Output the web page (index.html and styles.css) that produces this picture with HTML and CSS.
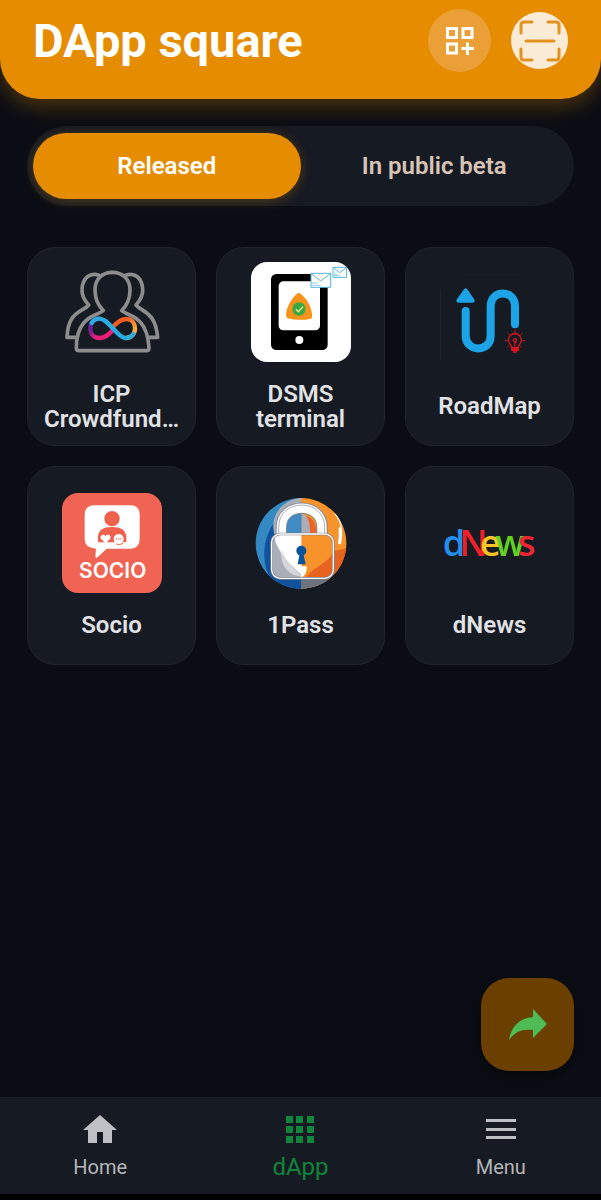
FILE: index.html
```html
<!DOCTYPE html>
<html lang="en">
<head>
    <meta charset="UTF-8">
    <meta name="viewport" content="width=device-width, initial-scale=1.0">
    <title>DApp square</title>
    <link rel="stylesheet" href="styles.css">
</head>
<body>
    <header class="header">
        <h1>DApp square</h1>
        <div class="header-actions">
            <button type="button" class="add-button" aria-label="Add dApp">
                <svg viewBox="0 0 56 56" width="28" height="28" fill="none" stroke="#fff" stroke-width="6">
                    <path d="M3 3h18v18H3zM34 3h18v18H34zM3 34h18v18H3z"/>
                    <path d="M43 31v25M31 43h25"/>
                </svg>
            </button>
            <button type="button" class="scan-button" aria-label="Scan code">
                <svg viewBox="0 0 40 40" width="40" height="40" fill="none" stroke="#e2931f" stroke-width="3" stroke-linecap="round" stroke-linejoin="round">
                    <path d="M1 12V4Q1 1 4 1H12M28 1h8Q39 1 39 4v8M39 28v8Q39 39 36 39H28M12 39H4Q1 39 1 36V28"/>
                    <path d="M6 20h28"/>
                </svg>
            </button>
        </div>
    </header>

    <main class="content">
        <div class="tabs" role="tablist">
            <button type="button" class="tab active" role="tab" aria-selected="true">Released</button>
            <button type="button" class="tab" role="tab" aria-selected="false">In public beta</button>
        </div>

        <div class="grid">
            <a href="#icp" class="card">
                <svg class="logo" viewBox="123 63 300 300" fill="none" stroke-linejoin="round" stroke-linecap="round">
                    <g stroke="#8d8d8d" stroke-width="11">
                        <path d="M234 103C208 93 184 110 183 146C182 166 192 180 203 192C192 206 170 208 153 232C142 248 139 268 138 289H163"/>
                        <path d="M314 103C340 93 364 110 365 146C366 166 356 180 345 192C356 206 376 208 393 232C404 248 408 268 410 289H385"/>
                        <path d="M274 94C242 94 222 116 222 147C222 172 231 193 247 209C232 221 208 222 188 246C173 264 166 290 166 320Q166 329 174 329H376Q384 329 384 320C382 290 376 264 360 246C340 222 316 221 302 209C318 193 327 172 327 147C327 116 306 94 274 94Z"/>
                    </g>
                    <g stroke-width="13">
                        <path stroke="url(#purple)" d="M276 267C262 282 252 291 236 291C218 291 208 279 208 262C208 244 220 233 236 233"/>
                        <path stroke="url(#orange)" d="M276 257C290 242 300 234 316 234C332 234 342 246 342 262C342 279 331 290 315 291"/>
                        <path stroke="#29abe2" d="M212 246C220 232 236 230 248 237C270 249 284 279 306 289C318 294 330 289 337 279"/>
                    </g>
                    <defs>
                        <linearGradient id="purple" x1="0" y1="0" x2="1" y2="1">
                            <stop offset="0.300" stop-color="#6a1f97"/>
                            <stop offset="0.600" stop-color="#ed1e79"/>
                        </linearGradient>
                        <linearGradient id="orange" x1="0" y1="0" x2="1" y2="1">
                            <stop offset="0.300" stop-color="#f15a24"/>
                            <stop offset="0.800" stop-color="#fbb03b"/>
                        </linearGradient>
                    </defs>
                </svg>
                <span class="name">ICP<br>Crowdfund…</span>
            </a>

            <a href="#dsms" class="card">
                <svg class="logo rounded" viewBox="121 63 300 300">
                    <path fill="#fff" d="M121 63h300v300H121z"/>
                    <rect x="181" y="99" width="170" height="228" rx="16" fill="#000"/>
                    <rect x="204" y="121" width="124" height="147" rx="14" fill="#fff"/>
                    <circle cx="266" cy="297" r="12" fill="#fff"/>
                    <path fill="#f7931a" d="M264 156Q269 156 275 163Q296 183 302 208Q307 231 301 233Q264 241 229 231Q224 225 228 208Q236 181 254 163Q260 156 264 156Z"/>
                    <circle cx="265" cy="204" r="20" fill="#3aa844"/>
                    <path d="M256 205l7 7 14-15" fill="none" stroke="#f4f08a" stroke-width="4"/>
                    <g fill="#fff" stroke="#56b4dc" stroke-width="3">
                        <path d="M301 97h59v42h-59zM367 79h41v30h-41z"/>
                        <path d="M301 97l29 23 30-23M367 79l20 16 21-16" fill="none"/>
                        <path d="M303 126h18M303 133h27M369 99h12M369 104h18" stroke-width="2"/>
                    </g>
                </svg>
                <span class="name">DSMS<br>terminal</span>
            </a>

            <a href="#roadmap" class="card">
                <svg class="logo" viewBox="120 99 300 300" fill="none" stroke-linecap="round" stroke-linejoin="round">
                    <path d="M122 145v212" stroke="#262b35" stroke-width="2"/>
                    <path d="M190 100h180" stroke="#1b1f28" stroke-width="2"/>
                    <path d="M197 148l-22 31h43z" fill="#1ca4e6" stroke="#1ca4e6" stroke-width="12"/>
                    <path d="M197 210V284C197 334 272 336 272 284V195C272 145 345 145 345 195V250" stroke="#1ca4e6" stroke-width="24"/>
                    <g stroke="#d9141c" stroke-width="4">
                        <path d="M336 319C334 309 325 309 325 297A19 19 0 0 1 364 297C364 309 356 309 354 319"/>
                        <path d="M345 268v7M323 277l5 5M367 277l-5 5M315 299h6M369 299h6M324 319l4-4M365 319l-4-4" stroke-width="3"/>
                        <circle cx="345" cy="298" r="5"/>
                        <path d="M345 303v12"/>
                        <path d="M335 320h20v8h-20zM340 333h10" fill="#d9141c"/>
                    </g>
                </svg>
                <span class="name">RoadMap</span>
            </a>

            <a href="#socio" class="card">
                <svg class="logo rounded" viewBox="123 98 300 300">
                    <path fill="#f16353" d="M123 98h300v300H123z"/>
                    <path fill="#fff" d="M221 135H328Q356 135 356 163V237Q356 265 328 265H257L228 292Q223 293 223 286L225 265Q191 264 191 237V163Q191 135 221 135Z"/>
                    <g fill="#ef604f">
                        <circle cx="273" cy="175" r="23"/>
                        <path d="M231 244V228C233 209 247 200 273 200C299 200 313 209 316 228V244Q316 246 312 246H235Q231 246 231 244Z"/>
                    </g>
                    <path fill="#fff" d="M254 249l-13-12c-8-9 5-20 13-10c8-10 20 1 12 10z"/>
                    <circle cx="293" cy="236" r="15" fill="#fff"/>
                    <path d="M286 251q9 5 20-2" fill="none" stroke="#ef604f" stroke-width="3"/>
                    <g fill="#ef604f">
                        <circle cx="286" cy="236" r="2"/>
                        <circle cx="293" cy="236" r="2"/>
                        <circle cx="300" cy="236" r="2"/>
                    </g>
                    <text class="socio-text" x="275" y="353" text-anchor="middle">SOCIO</text>
                </svg>
                <span class="name">Socio</span>
            </a>

            <a href="#1pass" class="card">
                <svg class="logo" viewBox="120 98 300 300">
                    <defs>
                        <clipPath id="disc"><circle cx="270" cy="249" r="136"/></clipPath>
                        <clipPath id="lock"><rect x="182" y="221" width="185" height="133" rx="26"/></clipPath>
                    </defs>
                    <g clip-path="url(#disc)">
                        <path fill="#3589c3" d="M130 110h145v280H130z"/>
                        <path fill="#10529b" d="M190 185C170 215 158 250 160 290C162 330 175 350 200 375L270 390V345L210 330V190Z"/>
                        <path fill="#aaaeb9" d="M270 112C215 118 175 165 190 222H210C205 170 235 128 275 128V112Z"/>
                        <path fill="#f7932a" d="M270 110h140v280H270z"/>
                        <path fill="#e96320" d="M360 275L410 262V310L340 365L350 345Z"/>
                        <path fill="#6c737f" d="M270 350H355L330 390H270z"/>
                        <path d="M371 158C388 178 393 195 389 215" fill="none" stroke="#fff" stroke-width="4" stroke-linecap="round"/>
                        <path d="M388 205Q390 228 386 247" fill="none" stroke="#fff" stroke-width="10" stroke-linecap="round"/>
                    </g>
                    <path fill="#408bc3" d="M226 221V202C226 176 247 160 272 160V221Z"/>
                    <path fill="#aaaeb9" d="M272 160C287 162 298 180 298 221H272Z"/>
                    <path fill="#ec6528" d="M285 166C307 174 316 188 316 221H297C298 192 293 174 285 166Z"/>
                    <g fill="none">
                        <path d="M211 222V201C211 124 333 124 333 201V222" stroke="#858a93" stroke-width="34"/>
                        <path d="M211 222V201C211 124 333 124 333 201V222" stroke="#fff" stroke-width="28"/>
                        <path d="M203 222V201C203 112 341 112 341 201V222" stroke="#a9adb5" stroke-width="3"/>
                    </g>
                    <g clip-path="url(#lock)">
                        <path fill="#fff" d="M180 218h92v140h-92z"/>
                        <path fill="#aaaeb9" d="M182 221H192C188 255 211 267 211 287L272 344V358H182Z"/>
                        <path fill="#d5d5dc" d="M211 267V287C212 325 240 347 273 349C249 321 222 304 211 267Z"/>
                        <path fill="#f7932a" d="M272 218h98v140h-98z"/>
                        <path fill="#e96320" d="M370 268C355 310 320 310 284 351V360H370Z"/>
                        <path fill="#fff" d="M270 318H287Q289 337 276 349H270Z"/>
                    </g>
                    <rect x="182" y="221" width="185" height="133" rx="26" fill="none" stroke="#777d87" stroke-width="8"/>
                    <rect x="182" y="221" width="185" height="133" rx="26" fill="none" stroke="#fff" stroke-width="4"/>
                    <circle cx="271" cy="271" r="15" fill="#07539b"/>
                    <path d="M266 280h11l7 32h-24z" fill="#07539b"/>
                </svg>
                <span class="name">1Pass</span>
            </a>

            <a href="#dnews" class="card">
                <svg class="logo" viewBox="120 98 300 300">
                    <text class="dnews-text" y="287">
                        <tspan x="128" fill="#2490ee">d</tspan><tspan x="178" fill="#ee202c">N</tspan><tspan x="240" fill="#f6c525">e</tspan><tspan x="286" fill="#62d321">w</tspan><tspan x="354" fill="#ee2733">s</tspan>
                    </text>
                </svg>
                <span class="name">dNews</span>
            </a>
        </div>
    </main>

    <button type="button" class="share-button" aria-label="Share">
        <svg viewBox="0 0 38 32" width="38" height="32" fill="#4fbb55">
            <path d="M0 31C2 17 11 9 24 8V0L38 15L24 29V21C12 20 6 23 0 31Z"/>
        </svg>
    </button>

    <nav class="bottom-nav">
        <a href="#home">
            <svg viewBox="0 0 34 34" width="34" height="34" fill="#bfc0c3"><path d="M17 3L0 18H5V31H14V20H20V31H29V18H34Z"/></svg>
            <span>Home</span>
        </a>
        <a href="#dapp" class="current">
            <svg viewBox="0 0 34 34" width="34" height="34" fill="#11853c">
                <path d="M3 4h7v7H3zM13 4h7v7h-7zM24 4h7v7h-7zM3 14h7v7H3zM13 14h7v7h-7zM24 14h7v7h-7zM3 24h7v7H3zM13 24h7v7h-7zM24 24h7v7h-7z"/>
            </svg>
            <span>dApp</span>
        </a>
        <a href="#menu">
            <svg viewBox="0 0 34 34" width="34" height="34" fill="#bfc0c3"><path d="M2 7h30v3H2zM2 16h30v3H2zM2 24h30v3H2z"/></svg>
            <span>Menu</span>
        </a>
    </nav>
</body>
</html>
```
FILE: styles.css
```css
* {
    box-sizing: border-box;
}

body {
    font-family: Roboto, sans-serif;
    margin: 0;
    min-height: 100vh;
    display: flex;
    flex-direction: column;
    background-color: #0a0d14;
    color: #e1e2e6;
}

button {
    border: none;
    padding: 0;
    font-family: inherit;
    cursor: pointer;
}

svg {
    display: block;
}

.header {
    display: flex;
    justify-content: space-between;
    align-items: center;
    padding: 9px 33px 27px;
    background-color: #e68c00;
    border-radius: 0 0 40px 40px;
    box-shadow: 0 8px 20px rgba(230, 140, 0, 0.3);
}

h1 {
    margin: 0;
    font-size: 47px;
    line-height: 54px;
    font-weight: 700;
    color: #fff;
}

.header-actions {
    display: flex;
    align-items: center;
    gap: 20px;
}

.add-button,
.scan-button {
    display: flex;
    align-items: center;
    justify-content: center;
    border-radius: 50%;
}

.scan-button svg {
    overflow: visible;
}

.add-button {
    width: 63px;
    height: 63px;
    background-color: #eaa037;
}

.scan-button {
    width: 57px;
    height: 57px;
    background-color: #faebd7;
}

.content {
    flex: 1;
    padding: 27px;
}

.tabs {
    display: flex;
    padding: 7px 6px;
    border-radius: 40px;
    background-color: #161a22;
}

.tab {
    flex: 1;
    height: 66px;
    border-radius: 33px;
    background: none;
    color: #d8c3b5;
    font-size: 24px;
    font-weight: 600;
}

.tab.active {
    background-color: #e68c00;
    color: #fff;
    box-shadow: 0 2px 12px rgba(230, 140, 0, 0.3);
}

.grid {
    display: grid;
    grid-template-columns: repeat(3, 1fr);
    gap: 20px;
    margin-top: 41px;
}

.card {
    display: flex;
    flex-direction: column;
    align-items: center;
    justify-content: center;
    gap: 20px;
    height: 199px;
    border: 1px solid #20242d;
    border-radius: 28px;
    background-color: #161a22;
    color: inherit;
    text-decoration: none;
}

.logo {
    width: 100px;
    height: 100px;
}

.rounded {
    border-radius: 16px;
}

.name {
    font-size: 24px;
    line-height: 25px;
    font-weight: 600;
    text-align: center;
}

.socio-text {
    font-family: Inter, sans-serif;
    font-size: 63px;
    font-weight: 600;
    fill: #fff;
}

.dnews-text {
    font-family: "Open Sans", sans-serif;
    font-size: 108px;
    font-weight: 600;
}

.share-button {
    position: fixed;
    right: 27px;
    bottom: 129px;
    display: flex;
    align-items: center;
    justify-content: center;
    width: 93px;
    height: 93px;
    border-radius: 28px;
    background-color: #6b3f00;
    box-shadow: 0 6px 12px rgba(0, 0, 0, 0.4);
}

.bottom-nav {
    display: grid;
    grid-template-columns: repeat(3, 1fr);
    padding: 14px 0;
    background-color: #161a22;
    border-top: 1px solid #1b1f27;
    border-bottom: 6px solid #000;
}

.bottom-nav a {
    display: flex;
    flex-direction: column;
    align-items: center;
    gap: 8px;
    color: #b5b6b9;
    font-size: 20px;
    line-height: 26px;
    text-decoration: none;
}

.bottom-nav .current {
    color: #11853c;
    font-size: 24px;
}
```
